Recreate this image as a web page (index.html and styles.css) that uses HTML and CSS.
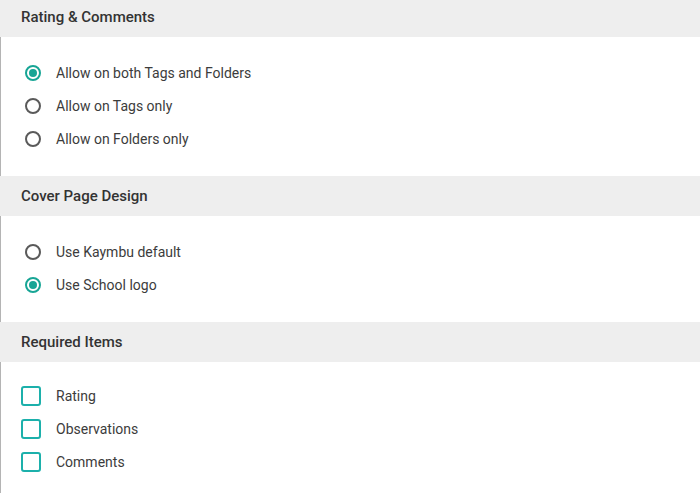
FILE: index.html
```html
<!DOCTYPE html>
<html>
<head>
<meta charset="utf-8">
<link rel="stylesheet" href="styles.css">
</head>
<body>
<div class="page">
  <div class="section-head">Rating &amp; Comments</div>
  <div class="section-body">
    <label class="option"><span class="radio checked"></span><span class="label">Allow on both Tags and Folders</span></label>
    <label class="option"><span class="radio"></span><span class="label">Allow on Tags only</span></label>
    <label class="option"><span class="radio"></span><span class="label">Allow on Folders only</span></label>
  </div>
  <div class="section-head">Cover Page Design</div>
  <div class="section-body">
    <label class="option"><span class="radio"></span><span class="label">Use Kaymbu default</span></label>
    <label class="option"><span class="radio checked"></span><span class="label">Use School logo</span></label>
  </div>
  <div class="section-head">Required Items</div>
  <div class="section-body section-body--checks">
    <label class="option"><span class="checkbox"></span><span class="label">Rating</span></label>
    <label class="option"><span class="checkbox"></span><span class="label">Observations</span></label>
    <label class="option"><span class="checkbox"></span><span class="label">Comments</span></label>
  </div>
</div>
</body>
</html>
```
FILE: styles.css
```css
html, body {
  margin: 0;
  padding: 0;
  background: #ffffff;
}
body {
  font-family: Roboto, "Liberation Sans", Arial, sans-serif;
  overflow: hidden;
}
.page {
  margin-top: -3px;
  width: 700px;
}
.section-head {
  height: 40px;
  box-sizing: border-box;
  padding-left: 21px;
  display: flex;
  align-items: center;
  background: #eeeeee;
  color: #333333;
  font-size: 15px;
  font-weight: 500;
}
.section-body {
  border-left: 1px solid #b4b4b4;
  padding: 19px 0 21px 20px;
  display: flex;
  flex-direction: column;
}
.section-body--checks {
  padding-top: 17px;
}
.option {
  height: 33px;
  display: flex;
  align-items: center;
  color: #3c3c3c;
  font-size: 14px;
}
.radio {
  width: 16px;
  height: 16px;
  box-sizing: border-box;
  border: 2px solid #5a5a5a;
  border-radius: 50%;
  margin-left: 4px;
  margin-right: 15px;
  display: flex;
  align-items: center;
  justify-content: center;
}
.radio.checked {
  border-color: #17a595;
}
.radio.checked::after {
  content: "";
  width: 8px;
  height: 8px;
  border-radius: 50%;
  background: #17a595;
}
.checkbox {
  width: 20px;
  height: 20px;
  box-sizing: border-box;
  border: 2px solid #1cb0ab;
  border-radius: 3px;
  margin-right: 15px;
}
.label {
  line-height: 20px;
}
```
